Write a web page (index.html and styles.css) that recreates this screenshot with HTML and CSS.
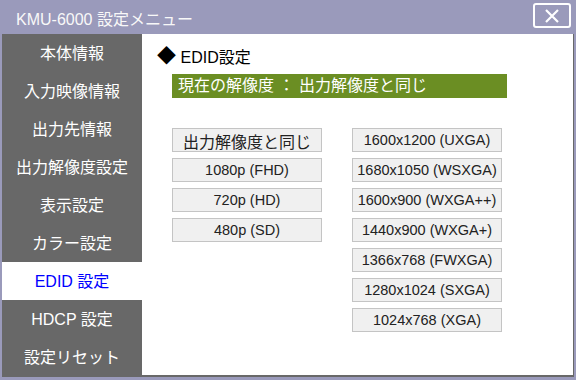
FILE: index.html
```html
<!DOCTYPE html>
<html lang="ja">
<head>
    <meta charset="UTF-8">
    <title>KMU-6000 設定メニュー</title>
    <link rel="stylesheet" href="styles.css">
</head>
<body>
    <div class="window">
        <div class="titlebar">
            <span class="title">KMU-6000 設定メニュー</span>
            <button class="close" type="button" aria-label="閉じる">
                <svg width="16" height="16" viewBox="0 0 16 16">
                    <path d="M2 2 L14 14 M14 2 L2 14" stroke="#fff" stroke-width="2.2" fill="none"/>
                </svg>
            </button>
        </div>
        <div class="panel">
            <ul class="menu">
                <li>本体情報</li>
                <li>入力映像情報</li>
                <li>出力先情報</li>
                <li>出力解像度設定</li>
                <li>表示設定</li>
                <li>カラー設定</li>
                <li class="active">EDID 設定</li>
                <li>HDCP 設定</li>
                <li>設定リセット</li>
            </ul>
            <div class="content">
                <h2 class="heading"><span class="mark">◆</span> EDID設定</h2>
                <div class="current">現在の解像度 ： 出力解像度と同じ</div>
                <div class="options">
                    <div class="col">
                        <button class="opt jp">出力解像度と同じ</button>
                        <button class="opt">1080p (FHD)</button>
                        <button class="opt">720p (HD)</button>
                        <button class="opt">480p (SD)</button>
                    </div>
                    <div class="col">
                        <button class="opt">1600x1200 (UXGA)</button>
                        <button class="opt">1680x1050 (WSXGA)</button>
                        <button class="opt">1600x900 (WXGA++)</button>
                        <button class="opt">1440x900 (WXGA+)</button>
                        <button class="opt">1366x768 (FWXGA)</button>
                        <button class="opt">1280x1024 (SXGA)</button>
                        <button class="opt">1024x768 (XGA)</button>
                    </div>
                </div>
            </div>
        </div>
    </div>
</body>
</html>
```

FILE: styles.css
```css
html, body {
    margin: 0;
    padding: 0;
}
body {
    font-family: "Liberation Sans", "Noto Sans CJK JP", sans-serif;
    background-color: #9a9abb;
    width: 576px;
    height: 380px;
    overflow: hidden;
}
.window {
    display: flex;
    flex-direction: column;
    height: 380px;
}
.titlebar {
    height: 34px;
    display: flex;
    align-items: center;
    justify-content: space-between;
    padding: 0 5px 0 16px;
    box-sizing: border-box;
}
.title {
    color: #f8f8f8;
    font-size: 16px;
    margin-top: 1px;
}
.close {
    width: 38px;
    height: 25px;
    margin-top: -3px;
    border: 2px solid #fff;
    border-radius: 3px;
    background: transparent;
    padding: 0;
    display: flex;
    align-items: center;
    justify-content: center;
}
.panel {
    display: flex;
    margin: 0 2px;
    height: 343px;
    background-color: #686868;
}
.menu {
    list-style: none;
    margin: 0;
    padding: 0;
    width: 140px;
}
.menu li {
    height: 36px;
    line-height: 36px;
    padding-top: 2px;
    text-align: center;
    color: #fff;
    font-size: 16px;
}
.menu li.active {
    background-color: #fff;
    color: #0000ff;
}
.content {
    flex: 1;
    background-color: #fff;
    margin: 0 1px 2px 0;
    padding: 13px 0 0 15px;
}
.heading {
    margin: 0;
    height: 20px;
    line-height: 20px;
    font-size: 16px;
    font-weight: normal;
    color: #000;
}
.mark {
    font-size: 19px;
}
.current {
    margin: 7px 0 0 15px;
    width: 335px;
    height: 24px;
    line-height: 24px;
    background-color: #6b8e23;
    color: #fff;
    font-size: 16px;
    padding-left: 6px;
    box-sizing: border-box;
}
.options {
    display: flex;
    gap: 30px;
    margin: 30px 0 0 15px;
}
.col {
    display: flex;
    flex-direction: column;
    gap: 6px;
}
.opt {
    width: 150px;
    height: 24px;
    padding: 0;
    background-color: #f0f0f0;
    border: 1px solid #c4c4c4;
    border-radius: 0;
    color: #222;
    font-family: "Liberation Sans", "Noto Sans CJK JP", sans-serif;
    font-size: 14.5px;
}
.opt.jp {
    font-size: 16px;
}
```
